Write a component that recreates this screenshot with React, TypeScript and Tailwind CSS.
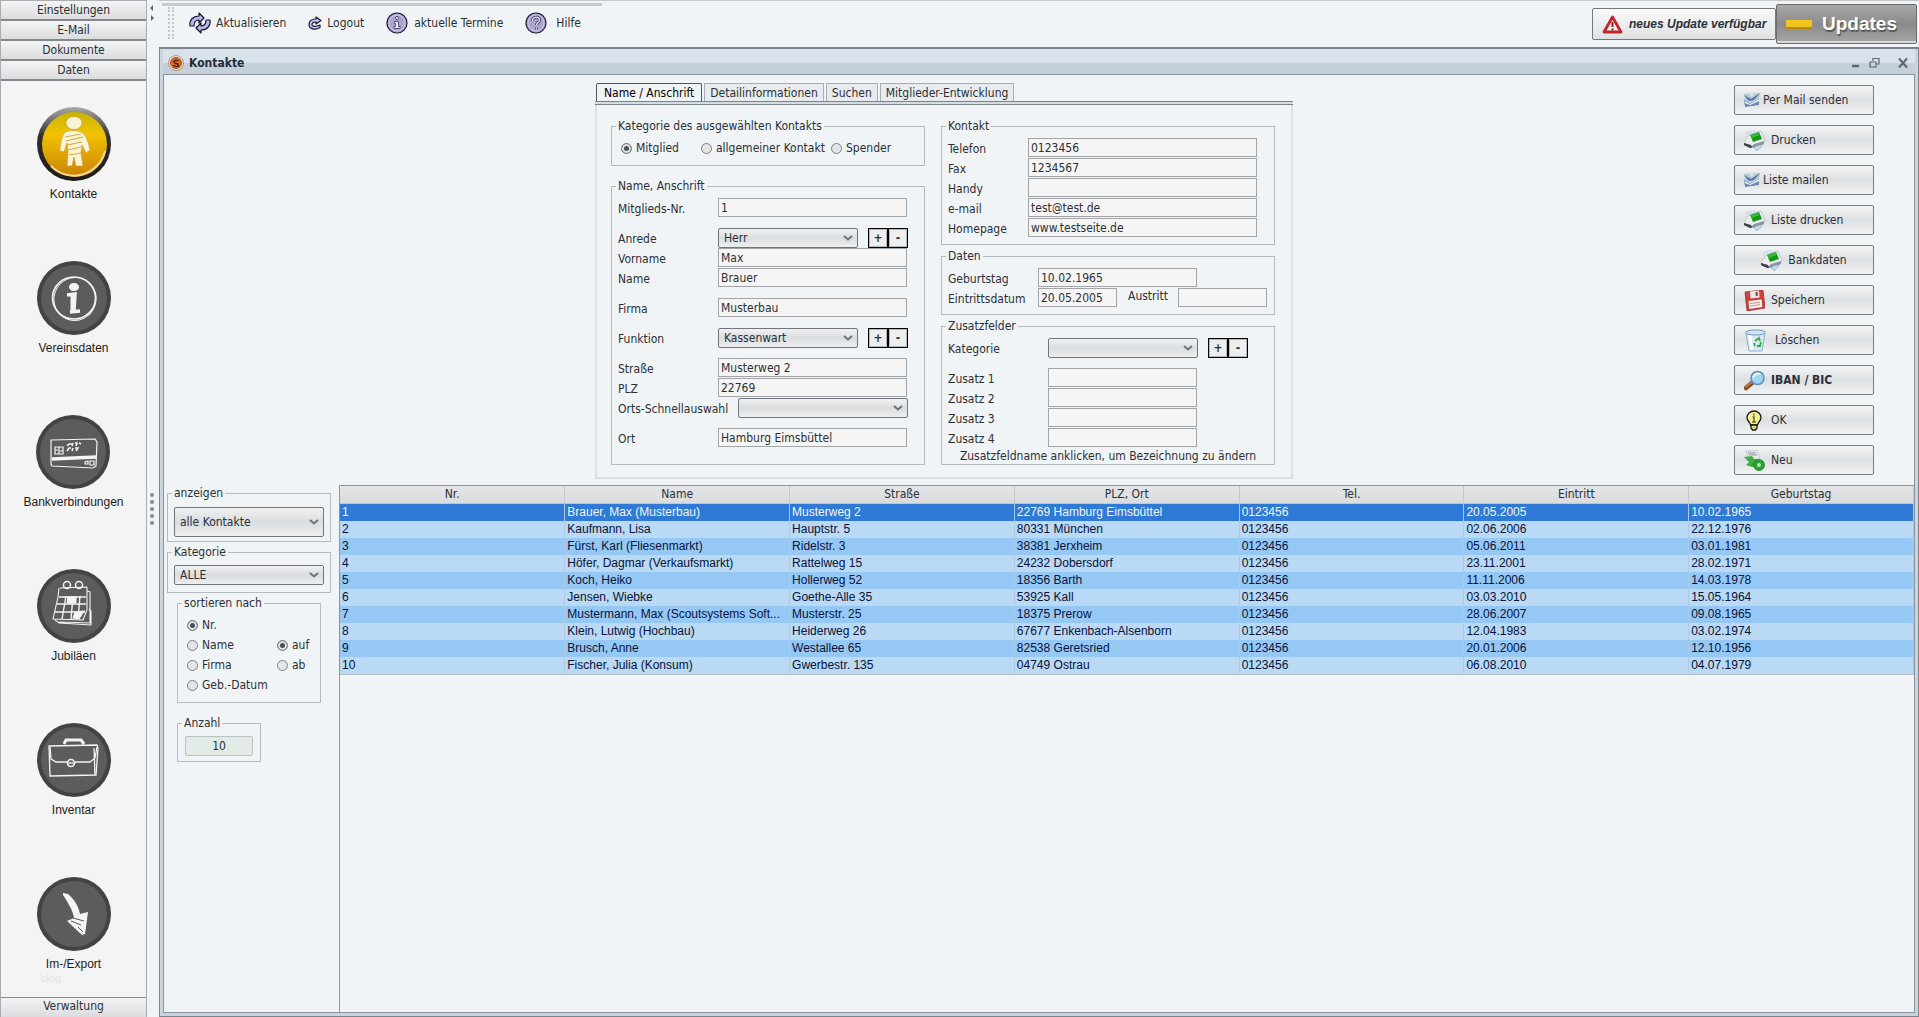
import { useState } from "react";
import clsx from "clsx";

type Row = [string, string, string, string, string, string, string];

const columns = ["Nr.", "Name", "Straße", "PLZ, Ort", "Tel.", "Eintritt", "Geburtstag"];

const rows: Row[] = [
  ["1", "Brauer, Max (Musterbau)", "Musterweg 2", "22769 Hamburg Eimsbüttel", "0123456", "20.05.2005", "10.02.1965"],
  ["2", "Kaufmann, Lisa", "Hauptstr. 5", "80331 München", "0123456", "02.06.2006", "22.12.1976"],
  ["3", "Fürst, Karl (Fliesenmarkt)", "Ridelstr. 3", "38381 Jerxheim", "0123456", "05.06.2011", "03.01.1981"],
  ["4", "Höfer, Dagmar (Verkaufsmarkt)", "Rattelweg 15", "24232 Dobersdorf", "0123456", "23.11.2001", "28.02.1971"],
  ["5", "Koch, Heiko", "Hollerweg 52", "18356 Barth", "0123456", "11.11.2006", "14.03.1978"],
  ["6", "Jensen, Wiebke", "Goethe-Alle 35", "53925 Kall", "0123456", "03.03.2010", "15.05.1964"],
  ["7", "Mustermann, Max (Scoutsystems Soft...", "Musterstr. 25", "18375 Prerow", "0123456", "28.06.2007", "09.08.1965"],
  ["8", "Klein, Lutwig (Hochbau)", "Heiderweg 26", "67677 Enkenbach-Alsenborn", "0123456", "12.04.1983", "03.02.1974"],
  ["9", "Brusch, Anne", "Westallee 65", "82538 Geretsried", "0123456", "20.01.2006", "12.10.1956"],
  ["10", "Fischer, Julia (Konsum)", "Gwerbestr. 135", "04749 Ostrau", "0123456", "06.08.2010", "04.07.1979"],
];

const tabs = ["Name / Anschrift", "Detailinformationen", "Suchen", "Mitglieder-Entwicklung"];

/* ---------- icons ---------- */

const RefreshIcon = () => (
  <svg className="size-[22px]" viewBox="0 0 22 22" fill="#b9b7dd" stroke="#15153a" strokeWidth="1.2" strokeLinejoin="round">
    <path d="M1 14C0 8 4 4 10 4V1l5 5-5 5V8c-3 0-5 2-5 6z" />
    <path d="M21 8c1 6-3 10-9 10v3l-5-5 5-5v3c3 0 5-2 5-6z" />
  </svg>
);

const LogoutIcon = () => (
  <svg className="size-[14px]" viewBox="0 0 14 14" fill="#c4c2e2" stroke="#15153a" strokeWidth="1.2" strokeLinejoin="round">
    <path d="M8 3V1l5 3.500-5 3.500V6C5 6 4 7 4 8.500S6 11 9 10l3-1v2.500C7 14.500 1 13 1 8.500 1 5 4 3 8 3z" />
  </svg>
);

const InfoIcon = () => (
  <svg className="size-[22px]" viewBox="0 0 22 22">
    <circle cx="11" cy="11" r="10" fill="#a9a5cf" stroke="#1d1b3d" strokeWidth="1.2" />
    <circle cx="11" cy="11" r="8" fill="none" stroke="#cfcce8" />
    <circle cx="11" cy="6" r="1.6" fill="#e9e8f6" stroke="#3c3a66" strokeWidth=".8" />
    <path d="M8.500 9.500h4v5h1.500v2h-6v-2h1.500v-3h-1z" fill="#e9e8f6" stroke="#3c3a66" strokeWidth=".8" />
  </svg>
);

const HelpIcon = () => (
  <svg className="size-[22px]" viewBox="0 0 22 22" fill="none">
    <circle cx="11" cy="11" r="10" fill="#a9a5cf" stroke="#1d1b3d" strokeWidth="1.2" />
    <circle cx="11" cy="11" r="8" stroke="#cfcce8" />
    <path d="M7.500 9c0-5 7-5 7-1 0 2.500-3 2.500-3 5M11.500 15.500v2" stroke="#3c3a66" strokeWidth="3" />
    <path d="M7.500 9c0-5 7-5 7-1 0 2.500-3 2.500-3 5M11.500 15.500v2" stroke="#e9e8f6" strokeWidth="1.400" />
  </svg>
);

const WarningIcon = () => (
  <svg className="h-[19px] w-[21px]" viewBox="0 0 21 19">
    <path d="M10.500 2L19 17H2z" fill="#f7eeee" stroke="#c5242b" strokeWidth="2.800" strokeLinejoin="round" />
    <path d="M10.500 7v5M10.500 13.500v2" stroke="#8b1a1f" strokeWidth="2" />
  </svg>
);

const MailIcon = () => (
  <svg className="h-4 w-4" viewBox="0 0 16 16">
    <path d="M0 2l16-1-1 8-14 1z" fill="#b7c8dc" />
    <path d="M0 3l7 4 9-6-6 7-5 1z" fill="#56749c" />
    <path d="M5 2h5L8 5z" fill="#dfe8f2" />
    <path d="M0 8l6 3 9-4v6L1 15z" fill="#6d8ab0" />
    <path d="M1 9l5 3 9-5v2l-9 4-5-2z" fill="#f3f7fb" />
  </svg>
);

const PrinterIcon = () => (
  <svg className="size-[21px]" viewBox="0 0 21 21">
    <path d="M2 3l7-3 4 3-7 4z" fill="#dce9f6" stroke="#b4c6da" strokeWidth=".6" />
    <path d="M0 12l6-8 11-3 4 9-2 4-10 3-9-2z" fill="#eceef0" stroke="#a8aeb4" strokeWidth=".6" />
    <path d="M0 13l8 3 2-2 10-3v3l-10 4-9-2z" fill="#8d959c" />
    <path d="M0 13l7 2 1 3-2 0-6-3z" fill="#3c4146" />
    <path d="M6 5l9-3 3 7-9 3z" fill="#129a16" />
    <path d="M7 5.500l7.500-2.500 1 2L8 8z" fill="#3cbc3e" />
    <path d="M10 17l6-2 2 1-5 5z" fill="#c5daf0" stroke="#7fa2c8" strokeWidth=".6" />
  </svg>
);

const FloppyIcon = () => (
  <svg className="size-[21px]" viewBox="0 0 21 21">
    <path d="M1 2l18-2 2 18-18 3z" fill="#d0413c" stroke="#94211f" strokeWidth=".7" />
    <path d="M6 1.500l9-1 .6 7-9 1z" fill="#e8ebee" />
    <path d="M11.500 2l2-.2.300 4-2 .2z" fill="#8c3835" />
    <path d="M4.500 11l13-1.500.8 7.500-13 2z" fill="#fbf2f1" />
    <path d="M6 13.500l10-1.200M6.300 16l10-1.300" stroke="#d58a86" />
  </svg>
);

const TrashIcon = () => (
  <svg className="size-[23px]" viewBox="0 0 23 23">
    <path d="M2 4h19l-3 18H5z" fill="#d6e8f6" stroke="#8fb2d3" />
    <path d="M4 6h4l1 15H6z" fill="#f6fbff" />
    <ellipse cx="11.500" cy="3.500" rx="10" ry="2.500" fill="#d5e4f2" stroke="#6f97c2" />
    <path d="M11 12l4-3 1 3M17 13l-1 4h-3M11 17l-1-3" fill="none" stroke="#36a845" strokeWidth="1.800" />
  </svg>
);

const SearchIcon = () => (
  <svg className="size-[21px]" viewBox="0 0 21 21">
    <path d="M9 12l-7 6" stroke="#8a4a22" strokeWidth="4.500" strokeLinecap="round" />
    <path d="M8 12l-6 5" stroke="#c98b5a" strokeWidth="1.500" strokeLinecap="round" />
    <circle cx="13.500" cy="8" r="6.500" fill="#9fd4f2" stroke="#5d8fb9" strokeWidth="1.500" />
    <path d="M9.500 7c1-3 4-4 6-3" stroke="#eefaff" strokeWidth="2" fill="none" strokeLinecap="round" />
  </svg>
);

const BulbIcon = () => (
  <svg className="size-[21px]" viewBox="0 0 21 21">
    <path d="M10 1c4 0 7 3 7 6.500S14 12 13.500 15h-7C6 12 3 11 3 7.500S6 1 10 1z" fill="#f3ef9a" stroke="#1c1c10" strokeWidth="1.300" />
    <path d="M7 15h6v3l-1.500 2h-3L7 18z" fill="#d8d48c" stroke="#1c1c10" strokeWidth="1.300" />
    <path d="M9.800 3.500v2M8.500 7h1.500v5M8 12h4" stroke="#6b671c" strokeWidth="1.500" fill="none" />
  </svg>
);

const NewIcon = () => (
  <svg className="size-[21px]" viewBox="0 0 21 21">
    <path d="M2 1l11-1 3 8-10 4z" fill="#e4e8ec" stroke="#b3bac1" strokeWidth=".6" />
    <path d="M4 3h8M5 5h8" stroke="#8a929a" />
    <path d="M0 7l8-1 2 3h4v7l-6 1-6-2 3-3z" fill="#3fae42" />
    <circle cx="15" cy="15" r="5.500" fill="#2da031" stroke="#1b7a20" strokeWidth=".7" />
    <circle cx="15" cy="15" r="2" fill="#b9e9b6" />
  </svg>
);

const AppIcon = () => (
  <svg className="size-4" viewBox="0 0 16 16">
    <circle cx="8" cy="8" r="7.500" fill="#f3e3d8" stroke="#b08468" strokeWidth=".8" />
    <circle cx="8" cy="8" r="5.500" fill="#e2691f" stroke="#8c3a12" strokeWidth=".8" />
    <path d="M10.500 6C9 4.500 6 5 6 7s4.500 1 4.500 3-3.500 1.500-5 .2" fill="none" stroke="#47200e" strokeWidth="1.400" />
  </svg>
);

/* the drawings inside the round sidebar buttons, 74 x 74 */
const PersonArt = () => (
  <g fill="#fbf3d6" stroke="#c9962a" strokeWidth=".6">
    <ellipse cx="37" cy="16" rx="8" ry="6.500" />
    <path d="M28 25c5-2 14-2 18 1 4 4 6 11 7 17l-4 3-4-8-1 8 2 13h-7l-2-9-2 9h-5l1-14-1-9-3 9-4-1c0-7 2-16 5-19z" />
    <path d="M28 30l16-3M29 34l17-4M30 38l15-3M31 43l13-3M32 48l12-2" stroke="#d9a93a" strokeWidth="1" />
  </g>
);

const InfoArt = () => (
  <g fill="none" stroke="#f4f4f4">
    <ellipse cx="37" cy="37" rx="21.500" ry="21" strokeWidth="1.600" />
    <ellipse cx="38" cy="38" rx="21" ry="21.500" strokeWidth="1" transform="rotate(20 38 38)" />
    <ellipse cx="37" cy="26" rx="4.500" ry="3.500" fill="#f4f4f4" />
    <path d="M30 34l8-1-1 17M33 51l10-1" strokeWidth="3.500" />
    <path d="M35 35v15" strokeWidth="3" />
  </g>
);

const CardArt = () => (
  <g fill="none" stroke="#f4f4f4" strokeWidth="1.200">
    <path d="M15 25l44-1 2 3-1 24-3 2-41-2-1-2z" />
    <path d="M16 44l44-2" strokeWidth="3.500" />
    <path d="M19 32h8v7h-8zM23 32v7M19 35h3M24 36h3" />
    <path d="M31 31l2-2h3M37 28l-1 3M39 28h2l-1 3M43 28l2 1M31 36l2-3h2M37 33l-1 3M39 33h3l-2 3" strokeWidth="1.600" />
    <path d="M49 47l3-1v3h-3zM54 46h4v4h-4z" />
  </g>
);

const CalendarArt = () => (
  <g fill="none" stroke="#f4f4f4" strokeWidth="1.100">
    <path d="M23 19l27-1M22 19l-1 9-5 22 30 1 4-10V18M50 22l3 1v31l-31-1M52 40l2 2v14l-32-2-4-3" />
    <path d="M22 28h27M20 35h29M18 43h30M29 27l-4 23M36 27l-2 23M43 27l-2 23" strokeWidth="1.400" />
    <path d="M31 28h8v6h-9zM38 43l9-1-5 8-6-1z" fill="#f4f4f4" />
    <circle cx="30" cy="16" r="3.500" strokeWidth="1.500" />
    <circle cx="42" cy="16" r="3.500" strokeWidth="1.500" />
  </g>
);

const BriefcaseArt = () => (
  <g fill="none" stroke="#f4f4f4" strokeWidth="1.300">
    <path d="M27 21l2-4h15l3 4" strokeWidth="3" />
    <path d="M12 23l48-1 1 3-2 27-46 1z" />
    <path d="M13 24l1 12 5 3h11M38 39h15l5-4 2-11M57 25l1 27" />
    <circle cx="34" cy="40" r="3.500" strokeWidth="1.600" />
    <path d="M31 40h6" />
  </g>
);

const ArrowArt = () => (
  <g fill="#f4f4f4">
    <path d="M26 16l5 1c8 7 11 14 12 20l8-2-3 22-3 1-15-14 7-3c-1-7-5-14-11-23z" />
    <path d="M34 44l10 4M36 41l11 3M41 50l5 5" stroke="#5a5a5a" strokeWidth="1" />
  </g>
);

const modules = [
  { name: "Kontakte", art: <PersonArt /> },
  { name: "Vereinsdaten", art: <InfoArt /> },
  { name: "Bankverbindungen", art: <CardArt /> },
  { name: "Jubiläen", art: <CalendarArt /> },
  { name: "Inventar", art: <BriefcaseArt /> },
  { name: "Im-/Export", art: <ArrowArt /> },
];

const actions = [
  { label: "Per Mail senden", icon: <MailIcon />, className: "gap-[3px]" },
  { label: "Drucken", icon: <PrinterIcon />, className: "gap-[6px]" },
  { label: "Liste mailen", icon: <MailIcon />, className: "gap-[3px]" },
  { label: "Liste drucken", icon: <PrinterIcon />, className: "gap-[6px]" },
  { label: "Bankdaten", icon: <PrinterIcon />, className: "gap-[6px] justify-center pr-[9px]" },
  { label: "Speichern", icon: <FloppyIcon />, className: "gap-[6px]" },
  { label: "Löschen", icon: <TrashIcon />, className: "gap-[8px]" },
  { label: "IBAN / BIC", icon: <SearchIcon />, className: "gap-[6px] font-bold" },
  { label: "OK", icon: <BulbIcon />, className: "gap-[6px]" },
  { label: "Neu", icon: <NewIcon />, className: "gap-[6px]" },
];

/* ---------- form parts ---------- */

type GroupProps = { title: string; className?: string; children: React.ReactNode };

const Group = ({ title, className, children }: GroupProps) => (
  <fieldset className={clsx("border border-[#b4bbc1] px-[6px]", className)}>
    <legend className="-ml-[2px] px-[2px] leading-4">{title}</legend>
    {children}
  </fieldset>
);

type FieldProps = { id: string; label: string; value?: string; labelClass: string; inputClass?: string };

const TextInput = ({ id, value = "", className }: { id: string; value?: string; className?: string }) => (
  <input
    id={id}
    type="text"
    defaultValue={value}
    className={clsx("h-[19px] border border-[#a2a5a8] bg-[#f5f5f5] px-[2px] outline-0", className)}
  />
);

const Field = ({ id, label, value, labelClass, inputClass }: FieldProps) => (
  <div className="flex h-5 items-start">
    <label htmlFor={id} className={clsx("shrink-0 leading-[22px]", labelClass)}>
      {label}
    </label>
    <TextInput id={id} value={value} className={inputClass} />
  </div>
);

type ComboProps = { id: string; options: string[]; className?: string; ariaLabel?: string };

const Combo = ({ id, options, className, ariaLabel }: ComboProps) => (
  <div className={clsx("relative", className)}>
    <select
      id={id}
      aria-label={ariaLabel}
      className="block h-full w-full appearance-none rounded-[2px] border border-[#70757b] bg-linear-to-b from-[#f0f1f2] via-[#dadde0] to-[#eceeef] pl-[5px] outline-0"
    >
      {options.map((o) => (
        <option key={o}>{o}</option>
      ))}
    </select>
    <svg className="pointer-events-none absolute top-1/2 right-[5px] h-[6px] w-[10px] -translate-y-1/2" viewBox="0 0 10 6">
      <path d="M1 1l4 3.500L9 1" fill="none" stroke="#6e7479" strokeWidth="2" />
    </svg>
  </div>
);

const PlusMinus = () => (
  <div className="ml-[10px] flex">
    <button type="button" className="h-5 w-5 border border-black bg-[#eceeef] leading-4 font-bold outline -outline-offset-2 outline-[#b5b8ba]">
      +
    </button>
    <button type="button" className="h-5 w-5 border border-black bg-[#eceeef] leading-4 font-bold outline -outline-offset-2 outline-[#b5b8ba]">
      -
    </button>
  </div>
);

type RadioProps = { name: string; label: string; checked?: boolean; className?: string };

const Radio = ({ name, label, checked, className }: RadioProps) => (
  <label className={clsx("flex h-5 items-center gap-[4px] whitespace-nowrap", className)}>
    <input
      type="radio"
      name={name}
      defaultChecked={checked}
      className="size-[11px] shrink-0 appearance-none rounded-full border border-[#7d8287] bg-[#e3e5e7] checked:bg-[#45505c] checked:shadow-[inset_0_0_0_2px_#e3e5e7]"
    />
    {label}
  </label>
);

const SectionButton = ({ label, className }: { label: string; className: string }) => (
  <button
    type="button"
    className={clsx(
      "h-5 w-full shrink-0 border-[#84878b] bg-linear-to-b from-[#f3f4f5] to-[#dadcde] text-center leading-4",
      className
    )}
  >
    {label}
  </button>
);

const App = () => {
  const [tab, setTab] = useState(tabs[0]);
  const [module, setModule] = useState("Kontakte");
  const [selected, setSelected] = useState("1");

  return (
    <div className="flex min-h-screen bg-[#f0f4f7] font-['DejaVu_Sans_Condensed','Noto_Sans',sans-serif] text-[12px] text-[#2b3036]">
      {/* sidebar */}
      <aside className="flex w-[147px] shrink-0 flex-col border-x border-t border-[#a9adb1] bg-[#f4f4f4]">
        {["Einstellungen", "E-Mail", "Dokumente", "Daten"].map((s) => (
          <SectionButton key={s} label={s} className="border-b-2" />
        ))}
        <nav className="flex grow flex-col items-center gap-[58px] pt-[25px] font-['Liberation_Sans',sans-serif] text-[#1c1c1c]">
          {modules.map((m) => (
            <button key={m.name} type="button" onClick={() => setModule(m.name)} className="relative h-24">
              <svg className="mx-auto size-[74px]" viewBox="0 0 74 74">
                <defs>
                  <linearGradient id="gold" x1="0" y1="0" x2="0" y2="1">
                    <stop offset="0" stopColor="#c9b400" />
                    <stop offset=".35" stopColor="#f2c200" />
                    <stop offset="1" stopColor="#c98208" />
                  </linearGradient>
                  <linearGradient id="rim" x1="0" y1="0" x2="0" y2="1">
                    <stop offset="0" stopColor="#a8a8a8" />
                    <stop offset=".4" stopColor="#2e2e2e" />
                    <stop offset="1" stopColor="#1c1c1c" />
                  </linearGradient>
                </defs>
                {module === m.name ? (
                  <>
                    <circle cx="37" cy="37" r="37" fill="url(#rim)" />
                    <circle cx="37.500" cy="37.500" r="32.500" fill="url(#gold)" />
                    <path d="M68 44a32 32 0 0 1-54 15" fill="none" stroke="#f6d78a" strokeWidth="2" />
                  </>
                ) : (
                  <>
                    <circle cx="37" cy="37" r="37" fill="#434343" />
                    <circle cx="37" cy="37" r="33" fill="#5c5c5c" />
                  </>
                )}
                {m.art}
              </svg>
              <span className="block pt-[5px] leading-4">{m.name}</span>
              {m.name === "Im-/Export" && (
                <span className="absolute -bottom-3 left-1 text-[11px] leading-3 text-[#e3e3e3]">blog</span>
              )}
            </button>
          ))}
        </nav>
        <SectionButton label="Verwaltung" className="border-t pb-[3px]" />
      </aside>

      {/* splitter */}
      <div className="relative flex w-[12px] shrink-0 flex-col items-center justify-center pr-[2px]">
        <svg className="absolute top-[3px] left-[2px] h-[18px] w-[6px]" viewBox="0 0 6 18">
          <path d="M4 2L1 5l3 3zM2 12l3 3-3 3z" fill="#5d646b" />
        </svg>
        <div className="flex flex-col gap-[3px]">
          {[0, 1, 2, 3, 4].map((d) => (
            <span key={d} className="size-1 rounded-full bg-[#858a8f]" />
          ))}
        </div>
      </div>

      <main className="flex min-w-0 grow flex-col">
        {/* toolbar */}
        <header className="flex h-[47px] items-start border-t border-[#c5c9cc]">
          <div className="mt-[2px] ml-[3px] flex h-9 w-[440px] items-center border-t-[3px] border-[#c9cccf] pl-[6px]">
            <div className="h-8 w-[6px] border-x-2 border-dotted border-[#c3c7ca]" />
            <div className="flex items-center gap-[22px] pl-[15px] whitespace-nowrap">
              <button type="button" className="flex items-center gap-[5px]">
                <RefreshIcon />
                Aktualisieren
              </button>
              <button type="button" className="flex items-center gap-[5px]">
                <LogoutIcon />
                Logout
              </button>
              <button type="button" className="flex items-center gap-[6px]">
                <InfoIcon />
                aktuelle Termine
              </button>
              <button type="button" className="flex items-center gap-[9px]">
                <HelpIcon />
                Hilfe
              </button>
            </div>
          </div>
          <div className="ml-auto flex items-center pt-[3px] pr-[2px] font-['Liberation_Sans',sans-serif] font-bold whitespace-nowrap">
            <button
              type="button"
              className="flex h-8 w-[184px] items-center gap-[6px] rounded-[2px] border border-[#74797e] bg-linear-to-b from-[#fafafa] to-[#dfe1e3] pl-[9px] italic"
            >
              <WarningIcon />
              neues Update verfügbar
            </button>
            <button
              type="button"
              className="flex h-10 w-[141px] items-center gap-[10px] rounded-[2px] border border-[#6b6e70] bg-linear-to-b from-[#a8a8a8] via-[#8b8b8b] to-[#a6a6a6] pl-[9px] text-[19px] text-white shadow-[inset_0_-2px_0_#d8d8d8]"
            >
              <span className="h-[9px] w-[26px] rounded-[1px] border-b-2 border-[#b88a0c] bg-[#f3c31f]" />
              <span className="[text-shadow:1px_2px_1px_#555]">Updates</span>
            </button>
          </div>
        </header>

        {/* Kontakte window */}
        <section className="flex grow flex-col border border-t-2 border-[#7b848c] bg-[#cdd5dc] px-[3px] pb-[3px]">
          <div className="flex h-[25px] shrink-0 items-center bg-linear-to-b from-[#d9e2ea] from-55% to-[#c4cfd8] to-55% pt-[2px] pr-[7px] pl-[5px]">
            <AppIcon />
            <h1 className="ml-[5px] text-[12px] font-bold text-[#1e2c3c]">Kontakte</h1>
            <div className="ml-auto flex items-center text-[#5c6670]">
              <button type="button" aria-label="Minimieren">
                <svg className="h-3 w-2" viewBox="0 0 8 12">
                  <path d="M0 9h7" stroke="currentColor" strokeWidth="2.500" />
                </svg>
              </button>
              <button type="button" aria-label="Wiederherstellen" className="ml-[9px]">
                <svg className="h-3 w-[11px]" viewBox="0 0 11 12" fill="none" stroke="currentColor" strokeWidth="1.200">
                  <path d="M1 5h6v5H1zM4 4V1.500h6V7H8" />
                </svg>
              </button>
              <button type="button" aria-label="Schließen" className="ml-[18px]">
                <svg className="h-3 w-[10px]" viewBox="0 0 10 12">
                  <path d="M1 1.500l8 9M9 1.500l-8 9" stroke="currentColor" strokeWidth="2" />
                </svg>
              </button>
            </div>
          </div>

          <div className="flex grow flex-col border border-[#8a939b] bg-[#f0f4f7]">
            <div className="flex shrink-0 pr-10 pb-[5px] pl-[431px]">
              {/* contact form */}
              <div className="shrink-0 pt-[8px]">
                <div className="flex h-[18px] items-end gap-[2px] pl-px">
                  {tabs.map((t) => (
                    <button
                      key={t}
                      type="button"
                      onClick={() => setTab(t)}
                      className={clsx(
                        "h-[18px] border border-b-0 leading-4 whitespace-nowrap",
                        tab === t
                          ? "rounded-t-[2px] border-[#4e565e] bg-[#f0f4f7] px-[7px] text-black"
                          : "border-[#a9aeb3] bg-[#e9ecee] px-[5px]"
                      )}
                    >
                      {t}
                    </button>
                  ))}
                </div>
                <div className="h-1 border-y border-[#79838c] bg-[#d5dce2]" />
                <div className="flex items-start gap-[16px] border-2 border-t-0 border-[#dae0e5] pt-[13px] pr-4 pb-[12px] pl-[14px]">
                  <div className="flex w-[314px] flex-col gap-[12px]">
                    <Group title="Kategorie des ausgewählten Kontakts" className="pt-[4px] pb-[7px]">
                      <div className="flex pl-[3px]">
                        <Radio name="art" label="Mitglied" checked className="w-[80px]" />
                        <Radio name="art" label="allgemeiner Kontakt" className="w-[130px]" />
                        <Radio name="art" label="Spender" />
                      </div>
                    </Group>
                    <Group title="Name, Anschrift" className="pt-[4px] pb-[16px]">
                      <div className="flex flex-col gap-[10px]">
                        <Field id="nr" label="Mitglieds-Nr." value="1" labelClass="w-[100px]" inputClass="w-[189px]" />
                        <div>
                          <div className="flex h-5">
                            <label htmlFor="anrede" className="w-[100px] leading-[22px]">
                              Anrede
                            </label>
                            <Combo id="anrede" options={["Herr", "Frau"]} className="h-5 w-[140px]" />
                            <PlusMinus />
                          </div>
                          <Field id="vorname" label="Vorname" value="Max" labelClass="w-[100px]" inputClass="w-[189px]" />
                          <Field id="name" label="Name" value="Brauer" labelClass="w-[100px]" inputClass="w-[189px]" />
                        </div>
                        <Field id="firma" label="Firma" value="Musterbau" labelClass="w-[100px]" inputClass="w-[189px]" />
                        <div className="flex h-5">
                          <label htmlFor="funktion" className="w-[100px] leading-[22px]">
                            Funktion
                          </label>
                          <Combo id="funktion" options={["Kassenwart"]} className="h-5 w-[140px]" />
                          <PlusMinus />
                        </div>
                        <div>
                          <Field id="strasse" label="Straße" value="Musterweg 2" labelClass="w-[100px]" inputClass="w-[189px]" />
                          <Field id="plz" label="PLZ" value="22769" labelClass="w-[100px]" inputClass="w-[189px]" />
                          <div className="flex h-5">
                            <label htmlFor="schnell" className="w-[120px] leading-[22px]">
                              Orts-Schnellauswahl
                            </label>
                            <Combo id="schnell" options={[""]} className="h-5 w-[170px]" />
                          </div>
                        </div>
                        <Field id="ort" label="Ort" value="Hamburg Eimsbüttel" labelClass="w-[100px]" inputClass="w-[189px]" />
                      </div>
                    </Group>
                  </div>

                  <div className="flex w-[334px] flex-col gap-[3px]">
                    <Group title="Kontakt" className="pt-[4px] pb-[6px]">
                      <Field id="tel" label="Telefon" value="0123456" labelClass="w-[80px]" inputClass="w-[229px]" />
                      <Field id="fax" label="Fax" value="1234567" labelClass="w-[80px]" inputClass="w-[229px]" />
                      <Field id="handy" label="Handy" labelClass="w-[80px]" inputClass="w-[229px]" />
                      <Field id="mail" label="e-mail" value="test@test.de" labelClass="w-[80px]" inputClass="w-[229px]" />
                      <Field id="web" label="Homepage" value="www.testseite.de" labelClass="w-[80px]" inputClass="w-[229px]" />
                    </Group>
                    <Group title="Daten" className="pt-[4px] pb-[6px]">
                      <Field id="geb" label="Geburtstag" value="10.02.1965" labelClass="w-[90px]" inputClass="w-[159px]" />
                      <div className="flex">
                        <Field id="eintritt" label="Eintrittsdatum" value="20.05.2005" labelClass="w-[90px]" inputClass="w-[79px]" />
                        <label htmlFor="austritt" className="ml-[11px] w-[50px] leading-4">
                          Austritt
                        </label>
                        <TextInput id="austritt" className="w-[89px]" />
                      </div>
                    </Group>
                    <Group title="Zusatzfelder" className="pt-[4px]">
                      <div className="mb-[10px] flex h-5">
                        <label htmlFor="zkat" className="w-[100px] leading-[22px]">
                          Kategorie
                        </label>
                        <Combo id="zkat" options={[""]} className="h-5 w-[150px]" />
                        <PlusMinus />
                      </div>
                      {["1", "2", "3", "4"].map((n) => (
                        <Field key={n} id={"zusatz" + n} label={"Zusatz " + n} labelClass="w-[100px]" inputClass="w-[149px]" />
                      ))}
                      <p className="text-center leading-4 whitespace-nowrap">
                        Zusatzfeldname anklicken, um Bezeichnung zu ändern
                      </p>
                    </Group>
                  </div>
                </div>
              </div>

              {/* actions */}
              <div className="ml-auto flex w-[140px] shrink-0 flex-col gap-[10px] pt-[10px]">
                {actions.map((a) => (
                  <button
                    key={a.label}
                    type="button"
                    className={clsx(
                      "flex h-[30px] items-center rounded-[2px] border border-[#7a7e82] bg-linear-to-b from-[#f3f4f5] via-[#dde0e3] to-[#f1f2f3] pl-[9px]",
                      a.className
                    )}
                  >
                    {a.icon}
                    {a.label}
                  </button>
                ))}
              </div>
            </div>

            <div className="flex grow">
              {/* filters */}
              <div className="flex w-[175px] shrink-0 flex-col items-start pt-px pl-[3px]">
                <Group title="anzeigen" className="w-[164px] pt-[6px] pb-[4px]">
                  <Combo id="anzeigen" ariaLabel="anzeigen" options={["alle Kontakte"]} className="h-[30px] w-[150px]" />
                </Group>
                <Group title="Kategorie" className="mt-[2px] w-[164px] pt-[5px] pb-[7px]">
                  <Combo id="kategorie" ariaLabel="Kategorie" options={["ALLE"]} className="h-5 w-[150px]" />
                </Group>
                <Group title="sortieren nach" className="mt-[2px] ml-[10px] w-[144px] pt-[4px] pb-[7px]">
                  <div className="flex pl-[3px]">
                    <div className="w-[90px]">
                      <Radio name="sort" label="Nr." checked />
                      <Radio name="sort" label="Name" />
                      <Radio name="sort" label="Firma" />
                      <Radio name="sort" label="Geb.-Datum" />
                    </div>
                    <div className="pt-5">
                      <Radio name="dir" label="auf" checked />
                      <Radio name="dir" label="ab" />
                    </div>
                  </div>
                </Group>
                <Group title="Anzahl" className="mt-[12px] ml-[10px] w-[84px] pt-[5px] pb-[5px]">
                  <input
                    aria-label="Anzahl"
                    readOnly
                    value="10"
                    className="ml-px block h-5 w-[68px] rounded-[2px] border border-[#b9c2c0] bg-[#e2ebe6] text-center outline-0"
                  />
                </Group>
              </div>

              {/* contact list */}
              <div className="mt-px min-w-0 grow border-t border-l border-[#8f9499] font-['Liberation_Sans',sans-serif]">
                <table className="w-full table-fixed border-collapse border-b border-[#b5bcc2]">
                  <thead className="bg-linear-to-b from-[#e3e5e6] to-[#d9dcde] font-['DejaVu_Sans_Condensed','Noto_Sans',sans-serif]">
                    <tr className="h-[17px] border-b border-[#c3c7ca]">
                      {columns.map((c) => (
                        <th key={c} className="border-r border-[#c6cacd] p-0 leading-[17px] font-normal">
                          {c}
                        </th>
                      ))}
                    </tr>
                  </thead>
                  <tbody>
                    {rows.map((r) => (
                      <tr
                        key={r[0]}
                        onClick={() => setSelected(r[0])}
                        className={clsx(
                          "h-[17px]",
                          selected === r[0]
                            ? "bg-[#2f7ad6] text-[#eef6ff]"
                            : "text-[#06123a] odd:bg-[#95c8f5] even:bg-[#b9d9f5]"
                        )}
                      >
                        {r.map((c, i) => (
                          <td key={i} className="truncate border-r border-[#a9cbe8] p-0 pl-[2px] leading-[17px]">
                            {c}
                          </td>
                        ))}
                      </tr>
                    ))}
                  </tbody>
                </table>
              </div>
            </div>
          </div>
        </section>
      </main>
    </div>
  );
};

export default App;
